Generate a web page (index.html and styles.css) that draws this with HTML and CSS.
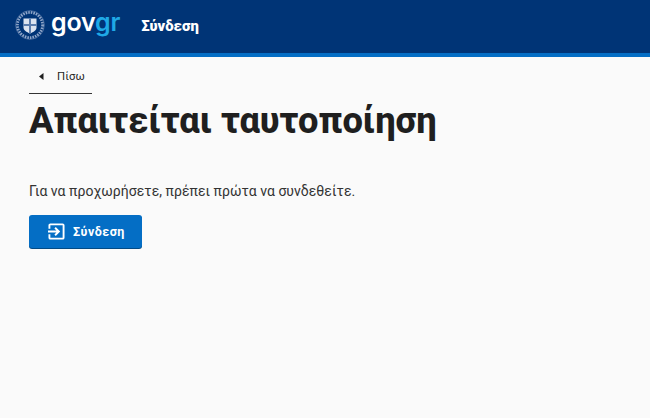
FILE: index.html
```html
<!DOCTYPE html>
<html lang="el">
<head>
<meta charset="utf-8">
<title>Σύνδεση</title>
<link rel="stylesheet" href="styles.css">
</head>
<body>
<header class="header">
  <div class="logo">
    <svg class="emblem" viewBox="0 0 30 30" width="30" height="30" aria-hidden="true">
      <circle cx="15" cy="15" r="12.600" fill="none" stroke="#8fa6c9" stroke-width="2.800" stroke-dasharray="1.600 1"/>
      <circle cx="15" cy="15" r="14.400" fill="none" stroke="#6f8ab3" stroke-width=".6"/>
      <path d="M8.500 8.500h13v9c0 2.800-3 4.500-6.500 6-3.500-1.500-6.500-3.200-6.500-6z" fill="#dbe3ef"/>
      <path d="M14 8.500h2v5.500h5.500v2H16v7.500h-2V16H8.500v-2H14z" fill="#5b7dad"/>
    </svg>
    <span class="wordmark">gov<span class="wordmark-accent">gr</span></span>
  </div>
  <a class="service" href="#">Σύνδεση</a>
</header>
<main class="main">
  <a class="back" href="#">
    <svg class="back-icon" viewBox="0 0 5 7" width="5" height="7" aria-hidden="true"><path d="M4.500 0v7L0 3.500z" fill="#1f1f1f"/></svg>
    <span>Πίσω</span>
  </a>
  <h1 class="title">Απαιτείται ταυτοποίηση</h1>
  <p class="lead">Για να προχωρήσετε, πρέπει πρώτα να συνδεθείτε.</p>
  <a class="button" href="#">
    <svg class="button-icon" viewBox="0 0 18 18" width="17" height="17" aria-hidden="true">
      <path d="M1.500 6V2.500a1 1 0 0 1 1-1h13a1 1 0 0 1 1 1v13a1 1 0 0 1-1 1h-13a1 1 0 0 1-1-1V12" fill="none" stroke="#fff" stroke-width="2"/>
      <path d="M0 9h10.500M7.500 5l4 4-4 4" fill="none" stroke="#fff" stroke-width="2"/>
    </svg>
    <span>Σύνδεση</span>
  </a>
</main>
</body>
</html>
```
FILE: styles.css
```css
* {
  box-sizing: border-box;
}

html,
body {
  height: 100%;
}

body {
  margin: 0;
  background: #fafafa;
  color: #1f1f1f;
  font-family: Roboto, "Liberation Sans", sans-serif;
  overflow: hidden;
}

a {
  text-decoration: none;
}

.header {
  display: flex;
  align-items: center;
  gap: 21px;
  height: 57px;
  padding: 0 0 4px 15px;
  background: #003476;
  border-bottom: 4px solid #046ec5;
}

.logo {
  display: flex;
  align-items: center;
  gap: 6px;
}

.emblem {
  display: block;
}

.wordmark {
  font-family: Inter, Lato, sans-serif;
  font-size: 25px;
  font-weight: 600;
  line-height: 1;
  letter-spacing: -.2px;
  color: #fff;
  position: relative;
  top: -2px;
}

.wordmark-accent {
  color: #1fa9e6;
}

.service {
  color: #fff;
  font-size: 14.800px;
  font-weight: 900;
  position: relative;
  top: 1px;
}

.main {
  padding: 0 29px;
}

.back {
  display: flex;
  align-items: center;
  gap: 13px;
  width: 63px;
  height: 37px;
  padding: 3px 0 0 10px;
  border-bottom: 1px solid #333;
  color: #1f1f1f;
  font-size: 11.300px;
  letter-spacing: .1px;
}

.title {
  margin: 6px 0 0;
  font-size: 36.300px;
  font-weight: 800;
  line-height: 42px;
}

.lead {
  margin: 39px 0 0;
  font-size: 14px;
  line-height: 20px;
  letter-spacing: .04px;
  color: #333;
}

.button {
  display: inline-flex;
  align-items: center;
  gap: 8px;
  height: 33px;
  margin-top: 14px;
  padding: 0 17px 0 19px;
  border-radius: 3px;
  background: #046ec5;
  box-shadow: 0 1px 0 #024a85;
  color: #fff;
  font-size: 12.500px;
  font-weight: 700;
  letter-spacing: .5px;
}

.button-icon {
  display: block;
}
```
